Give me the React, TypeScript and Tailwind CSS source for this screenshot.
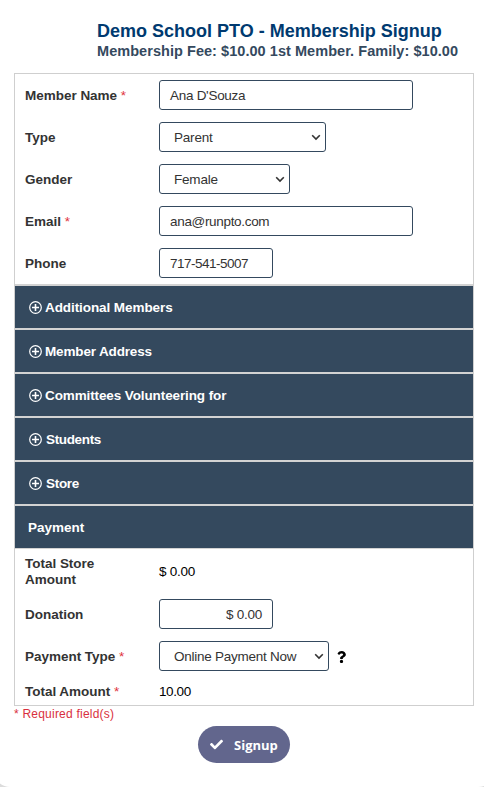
import type { ReactNode } from "react";
import { FaCheck, FaQuestion } from "react-icons/fa";

function Chevron() {
  return (
    <svg width="10" height="7" viewBox="0 0 10 7" fill="none" className="shrink-0">
      <path d="M1.2 1.3 5 5.1 8.8 1.3" stroke="#333" strokeWidth="1.6" />
    </svg>
  );
}

function PlusCircle() {
  return (
    <svg width="13" height="13" viewBox="0 0 13 13" fill="none" stroke="#fff" className="shrink-0">
      <circle cx="6.5" cy="6.5" r="5.8" strokeWidth="1.2" />
      <path d="M6.5 3v7M3 6.5h7" strokeWidth="1.6" />
    </svg>
  );
}

function Row({ label, required, children, className = "h-[42px]" }: { label: string; required?: boolean; children: ReactNode; className?: string }) {
  return (
    <div className={`flex items-center pl-[10px] ${className}`}>
      <div className="w-[134px] shrink-0 pr-8 pt-[2px] text-[13.5px] font-bold leading-4 tracking-[-0.02px] text-[#333]">
        <span className={required ? "whitespace-nowrap" : ""}>
          {label}
          {required && <span className="font-normal text-[#e0323c]"> *</span>}
        </span>
      </div>
      {children}
    </div>
  );
}

const box = "flex h-[30px] items-center rounded-[3px] border border-[#34495e] text-[13.5px] leading-4 text-[#333] whitespace-nowrap";

function Field({ value, className }: { value: string; className: string }) {
  return <div className={`${box} px-[10px] pt-[2px] ${className}`}>{value}</div>;
}

function Select({ value, className }: { value: string; className: string }) {
  return (
    <div className={`${box} justify-between pl-[14px] pr-[4px] ${className}`}>
      <span className="pt-[2px]">{value}</span>
      <Chevron />
    </div>
  );
}

const sections = [
  { name: "Additional Members", style: "gap-[3px] tracking-[-0.08px]" },
  { name: "Member Address", style: "gap-[3px] tracking-[-0.15px]" },
  { name: "Committees Volunteering for", style: "gap-[3px] tracking-[-0.11px]" },
  { name: "Students", style: "gap-[4px] tracking-[-0.35px]" },
  { name: "Store", style: "gap-[4px] tracking-[-0.3px]" },
];

export default function App() {
  return (
    <div className="h-[787px] w-[484px] overflow-hidden bg-[#dcdcdc] font-['Liberation_Sans',Arial,sans-serif]">
      <div className="-ml-[6px] h-[787px] w-[500px] rounded-b-[16px] bg-white pl-[6px] pt-[20px]">
        <header className="h-[53px] whitespace-nowrap pl-[97px] font-bold">
          <h1 className="text-[18px] leading-[22px] text-[#003a70]">Demo School PTO - Membership Signup</h1>
          <p className="text-[14.5px] leading-[18px] tracking-[0.05px] text-[#34495e]">Membership Fee: $10.00 1st Member. Family: $10.00</p>
        </header>

        <main className="ml-[14px] h-[633px] w-[460px] border border-[#cfcfcf]">
          <div className="h-[210px]">
            <Row label="Member Name" required>
              <Field value="Ana D'Souza" className="w-[254px] tracking-[-0.28px]" />
            </Row>
            <Row label="Type">
              <Select value="Parent" className="w-[167px] tracking-[-0.2px]" />
            </Row>
            <Row label="Gender">
              <Select value="Female" className="w-[131px] tracking-[-0.2px]" />
            </Row>
            <Row label="Email" required>
              <Field value="ana@runpto.com" className="w-[254px] tracking-[-0.32px]" />
            </Row>
            <Row label="Phone">
              <Field value="717-541-5007" className="w-[114px] tracking-[-0.5px]" />
            </Row>
          </div>

          <div className="text-[13.5px] font-bold leading-4 text-white">
            {sections.map((s) => (
              <div key={s.name} className={`flex h-[44px] items-center border-t-2 border-[#d3d3d3] bg-[#34495e] pl-[14px] ${s.style}`}>
                <PlusCircle />
                <span className="pt-[2px]">{s.name}</span>
              </div>
            ))}
            <div className="flex h-[45px] items-center border-t-2 border-b border-[#d3d3d3] bg-[#34495e] pl-[13px] pt-[2px]">Payment</div>
          </div>

          <Row label="Total Store Amount" className="h-[44px]">
            <span className="pt-[2px] text-[13.5px] leading-4 tracking-[-0.25px] text-black">$ 0.00</span>
          </Row>
          <Row label="Donation">
            <Field value="$ 0.00" className="w-[114px] justify-end tracking-[-0.25px]" />
          </Row>
          <Row label="Payment Type" required>
            <Select value="Online Payment Now" className="w-[170px] tracking-[-0.26px]" />
            <FaQuestion className="ml-[8px] mt-[2px] h-[12px] w-[9px] text-black" />
          </Row>
          <Row label="Total Amount" required className="h-[28px]">
            <span className="pt-[2px] text-[13.5px] leading-4 tracking-[-0.4px] text-black">10.00</span>
          </Row>
        </main>

        <p className="ml-[14px] h-[20px] text-[12px] leading-[16px] tracking-[0.22px] text-[#d9303e]">* Required field(s)</p>
        <button className="ml-[198px] flex h-[37px] w-[92px] items-center rounded-full bg-[#62668d] pl-[12px] font-['Open_Sans',sans-serif] text-[13px] font-bold text-white">
          <FaCheck className="mr-[11px] h-[13px] w-[13px]" />
          <span className="pt-[2px]">Signup</span>
        </button>
      </div>
    </div>
  );
}
